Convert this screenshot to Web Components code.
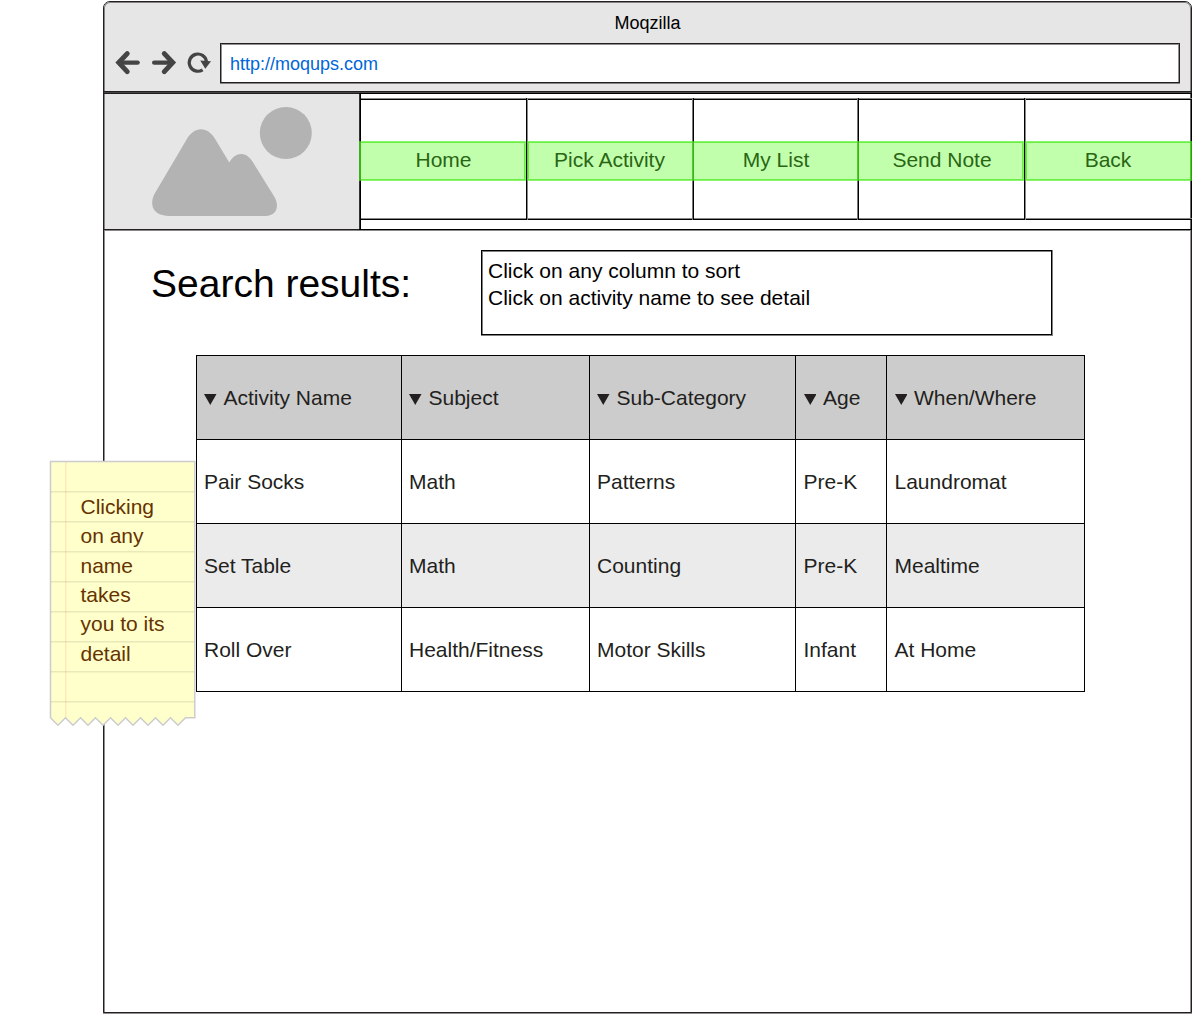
<!DOCTYPE html>
<html lang="en">
<head>
<meta charset="utf-8">
<title>Moqzilla</title>
<style>
html, body { margin: 0; height: 100%; background: #fff; }
body { font: 21px/1.3 "Liberation Sans", Arial, sans-serif; color: #000; overflow: hidden; position: relative; }
</style>
</head>
<body>
<mock-window heading="Moqzilla" address="http://moqups.com">
  <site-header slot="top">
    <nav-cell>Home</nav-cell>
    <nav-cell class="b">Pick Activity</nav-cell>
    <nav-cell class="c">My List</nav-cell>
    <nav-cell class="d">Send Note</nav-cell>
    <nav-cell class="e">Back</nav-cell>
  </site-header>
  <results-intro heading="Search results:">
    <div>Click on any column to sort</div>
    <div>Click on activity name to see detail</div>
  </results-intro>
  <results-table></results-table>
</mock-window>
<sticky-note>Clicking on any name takes you to its detail</sticky-note>

<script>
const define = (name, html, setup) => {
  const template = document.createElement('template');
  template.innerHTML = html;
  customElements.define(name, class extends HTMLElement {
    connectedCallback() {
      if (this.shadowRoot) return;
      const root = this.attachShadow({ mode: 'open' });
      root.append(template.content.cloneNode(true));
      if (setup) setup(this, root);
    }
  });
};

define('mock-window', `
<style>
:host { display: flex; flex-direction: column; box-sizing: border-box; width: 1089px; height: 1012px; margin-left: 103px;
  border: 1px solid #231f20; border-radius: 7px 7px 0 0; background: #fff; box-shadow: 0 1px #918f90; position: relative; top: 1px; }
.chrome { box-sizing: border-box; height: 90px; flex: none; background: #e6e6e6; border-bottom: 1px solid #231f20; border-radius: 6px 6px 0 0;
  box-shadow: inset 1px 0 #858384, inset -1px 0 #858384, inset 0 1px #858384; }
.title { height: 41px; box-sizing: border-box; padding: 2px 0 0; display: flex; align-items: center; justify-content: center; font-size: 18px; }
.bar { display: flex; align-items: center; padding: 0 11px; }
.icons { flex: none; width: 105px; height: 40px; }
.url { flex: 1; box-sizing: border-box; height: 40px; border: 1px solid #231f20; background: #fff; display: flex; align-items: center;
  padding: 3px 9px 0; font-size: 18px; color: #0066d9; box-shadow: inset 1px 1px #918f90, inset -1px 0 #918f90, 0 1px #858384; }
.page { flex: 1; box-shadow: inset 1px 0 #918f90, inset -1px 0 #918f90; }
</style>
<div class="chrome">
  <div class="title"></div>
  <div class="bar">
    <svg class="icons" viewBox="115 43 105 40">
      <g fill="none" stroke="#444" stroke-width="4.4" stroke-linecap="round">
        <path d="M137.600 62.600H121"/>
        <path d="M127.200 53.600L118.800 62.600L127.200 71.600" stroke-width="5"/>
        <path d="M154.200 62.600H170.500"/>
        <path d="M164.300 53.600L172.700 62.600L164.300 71.600" stroke-width="5"/>
        <path d="M202.600 69.800A8.600 8.600 0 1 1 206.400 61.500" stroke-width="3.2" stroke-linecap="butt"/>
      </g>
      <path d="M200.200 60.600L211 61.200L205.300 68.800Z" fill="#444"/>
    </svg>
    <div class="url"></div>
  </div>
</div>
<slot name="top"></slot>
<div class="page"><slot></slot></div>`, (el, root) => {
  root.querySelector('.title').textContent = el.getAttribute('heading');
  root.querySelector('.url').textContent = el.getAttribute('address');
});

define('site-header', `
<style>
:host { display: flex; flex: none; box-sizing: border-box; height: 139px; border-top: 1px solid #444; border-bottom: 1px solid #888; }
.logo { width: 255px; box-sizing: border-box; background: #e6e6e6; border-top: 1px solid #231f20; border-bottom: 1px solid #231f20; box-shadow: inset 1px 0 #858384; }
svg { display: block; width: 255px; height: 135px; }
.nav { flex: 1; box-sizing: border-box; border: 1px solid #000; border-left: 0; border-right: 0; padding: 4px 0 9px;
  margin-right: -1px; background: linear-gradient(90deg, #333 1px, #000 1px 2px, #fff 2px calc(100% - 2px), #666 calc(100% - 2px) calc(100% - 1px), #000 calc(100% - 1px)); }
.cells { height: 122px; box-sizing: border-box; display: grid; grid-template-columns: 167px 166px 165px 167px 168px;
  background: linear-gradient(#888 1px, #000 1px 2px, transparent 2px 120px, #888 120px 121px, #000 121px); }
</style>
<div class="logo"><svg viewBox="104 94 255 135" fill="#b3b3b3">
  <circle cx="285.8" cy="133" r="26"/>
  <path d="M170 216C153 216 148.500 205 155 193L186 140.500C194 125.500 208 125.500 216 140.500L229.300 162.500C235.500 151.500 246 151.500 252.500 161.500L274.500 197C280 207 276 216 265.500 216Z"/>
</svg></div>
<div class="nav"><div class="cells"><slot></slot></div></div>`);

define('nav-cell', `
<style>
:host { display: flex; align-items: center; --a: #333; --b: #000; --ml: 0px; --mr: 0px; --dx: 1px;
  background: linear-gradient(90deg, var(--a) 1px, var(--b) 1px 2px, transparent 2px); }
:host(.b), :host(.e) { --a: #000; --b: #888; --ml: 1px; --dx: -1px; }
:host(.e) { --dx: -.5px; }
:host(.b) { --mr: -2px; }
:host(.c) { --a: #777; --mr: -2px; --dx: .5px; }
:host(.d) { --a: #777; --dx: 1.5px; }
.spot { flex: 1; box-sizing: border-box; height: 40px; margin: 4px var(--mr) 0 var(--ml); display: flex; justify-content: center; align-items: center;
  border: 1px solid rgba(72,240,30,.65); background: rgba(102,255,51,.4); background-clip: padding-box;
  box-shadow: inset 0 0 0 1px rgba(60,230,10,.65); padding-bottom: 3px; color: #296614; white-space: nowrap; }
.label { margin-left: calc(var(--dx) * 2); }
</style>
<div class="spot"><span class="label"><slot></slot></span></div>`);

define('results-intro', `
<style>
:host { display: flex; justify-content: space-between; align-items: flex-start; padding: 19px 139px 0 47px; }
h1 { margin: 8px 0 0; font-size: 39px; font-weight: 400; line-height: 51px; }
.box { box-sizing: border-box; width: 571px; height: 85px; border: 1px solid #000; padding: 6px; line-height: 27.3px;
  box-shadow: inset 1px 1px #808080, 1px 0 #808080, 0 1px #808080, 1px 1px #808080; }
</style>
<h1></h1><div class="box"><slot></slot></div>`, (el, root) => {
  root.querySelector('h1').textContent = el.getAttribute('heading');
});

define('results-table', `
<style>
:host { display: grid; grid-template-columns: 204px 187px 205px 90px 197px; grid-auto-rows: 83px; gap: 1px; width: max-content;
  margin: 20px 0 0 92px; border: 1px solid #000; background: #000; color: #231f20; }
.cell { display: flex; align-items: center; padding: 0 7px; background: #fff; white-space: nowrap; }
.late { padding-left: 7.500px; }
.alt { background: #ebebeb; }
.head { background: #ccc; gap: 7px; }
svg { width: 12.500px; height: 11px; margin-top: 3px; fill: #231f20; }
</style>`, (el, root) => {
  const rows = [
    ['Activity Name', 'Subject', 'Sub-Category', 'Age', 'When/Where'],
    ['Pair Socks', 'Math', 'Patterns', 'Pre-K', 'Laundromat'],
    ['Set Table', 'Math', 'Counting', 'Pre-K', 'Mealtime'],
    ['Roll Over', 'Health/Fitness', 'Motor Skills', 'Infant', 'At Home']
  ];
  rows.forEach((row, i) => row.forEach((text, j) => {
    const cell = document.createElement('div');
    cell.className = 'cell' + (i === 0 ? ' head' : i === 2 ? ' alt' : '') + (j > 2 ? ' late' : '');
    if (i === 0) cell.innerHTML = '<svg viewBox="0 0 12.5 11"><path d="M0 0H12.500L6.250 11Z"/></svg>';
    const span = document.createElement('span');
    span.textContent = text;
    cell.append(span);
    root.append(cell);
  }));
});

define('sticky-note', `
<style>
:host { display: grid; position: absolute; left: 49px; top: 460px; width: 148px; height: 268px; color: #630; line-height: 29.4px; }
svg, .text { grid-area: 1 / 1; }
.text { padding: 31.700px 29px 0 31.500px; z-index: 1; }
</style>
<svg width="148" height="268" viewBox="49 460 148 268">
  <path id="paper" fill="#ffffcc" stroke="#ccc" stroke-width="1.5"/>
  <path d="M51 491.750H194M51 521.750H194M51 551.750H194M51 581.750H194M51 611.750H194M51 641.750H194M51 671.750H194M51 701.750H194" stroke="#000" stroke-opacity=".09" stroke-width="1.5"/>
  <path d="M65.750 462V717" stroke="#f00" stroke-opacity=".09" stroke-width="1.5"/>
</svg>
<div class="text"><slot></slot></div>`, (el, root) => {
  let d = 'M50.500 461.500H194.800V717.800H185.500';
  for (let x = 178; x > 55; x -= 15) d += `L${x} 725.300L${Math.max(x - 7.5, 50.5)} 717.800`;
  root.querySelector('#paper').setAttribute('d', d + 'Z');
});
</script>
</body>
</html>
